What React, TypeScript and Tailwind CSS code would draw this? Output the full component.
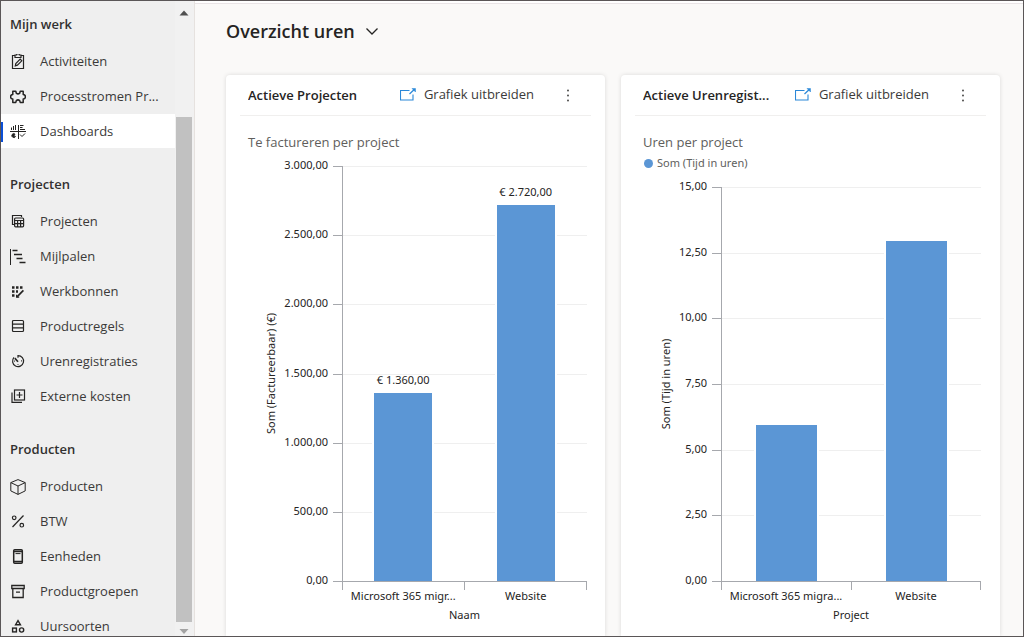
import type { ReactNode } from 'react';

interface NavItem {
  label: string;
  icon: ReactNode;
  active?: boolean;
}

interface NavGroup {
  title: string;
  items: NavItem[];
}

interface Bar {
  label: string;
  value: number;
  caption?: string;
}

interface ChartProps {
  top: number;
  left: number;
  right: number;
  barWidth: number;
  max: number;
  ticks: string[];
  bars: Bar[];
  yTitle: string;
  xTitle: string;
}

function Icon({ children }: { children: ReactNode }) {
  return (
    <svg
      viewBox="0 0 16 16"
      className="h-4 w-4 shrink-0"
      fill="none"
      stroke="#252423"
      strokeWidth="1.2"
      aria-hidden="true"
    >
      {children}
    </svg>
  );
}

const NAV: NavGroup[] = [
  {
    title: 'Mijn werk',
    items: [
      {
        label: 'Activiteiten',
        icon: (
          <Icon>
            <path d="M5 1.5H2.5v13h11v-13H11M5 3.500V1h1.600a1.400 1.400 0 0 1 2.800 0H11v2.500z" />
            <path d="M5.300 11.800l.5-2.200 4.400-4.400 1.600 1.600-4.400 4.400z" />
          </Icon>
        ),
      },
      {
        label: 'Processtromen Pr...',
        icon: (
          <Icon>
            <path
              strokeWidth="1.5"
              strokeLinejoin="round"
              d="M2.8 2.2H5.8L6.3 4.2Q8 5.6 9.7 4.2L10.2 2.2H13.2V5.5Q15.4 5.6 15.4 7.8T13.2 10.1V13.4H10.2L9.7 11.6Q8 10.2 6.3 11.6L5.8 13.4H2.8V10.1Q.6 10 .6 7.8T2.8 5.5z"
            />
          </Icon>
        ),
      },
      {
        label: 'Dashboards',
        active: true,
        icon: (
          <Icon>
            <path d="M0 7.5h16M8.5 1v14M1.5 6V3.5M3.5 6V2M5.5 6V1M10 1.500h3.500M10 3.500h2.500M10 5.500h5" strokeWidth="1" />
            <path d="M5 10a2 2 0 1 0 .6 2.400H3.800z" fill="#252423" strokeWidth="0.8" />
            <path d="M10 10.500l2 2 3-3" strokeWidth="1" />
          </Icon>
        ),
      },
    ],
  },
  {
    title: 'Projecten',
    items: [
      {
        label: 'Projecten',
        icon: (
          <Icon>
            <path d="M4 10.500H2.500v-9h9V3" />
            <rect x="4.6" y="4" width="9" height="8.8" rx="1" />
            <path d="M4.600 6.500h9M4.600 9.600h9M7.600 6.500v6.400M10.600 6.500v6.400" />
          </Icon>
        ),
      },
      {
        label: 'Mijlpalen',
        icon: (
          <Icon>
            <path d="M.5 0v16" strokeWidth="1" />
            <path d="M2.500 1.500h5M4 5.500h8M6.500 9.500h6M9.500 13.500h6" strokeWidth="1.6" />
          </Icon>
        ),
      },
      {
        label: 'Werkbonnen',
        icon: (
          <Icon>
            <path d="M2 3.500h10.500M2 7.500h6M2 11.500h2.500" strokeWidth="2.4" strokeDasharray="2.5 1.5" />
            <path d="M7 12.800L13.400 6.400" strokeWidth="1.7" />
            <path d="M6.600 10.800v2.400h2.600" />
          </Icon>
        ),
      },
      {
        label: 'Productregels',
        icon: (
          <Icon>
            <rect x="2.5" y="1.5" width="11" height="11" rx="1" />
            <path d="M2.500 5.200h11M2.500 8.800h11" />
          </Icon>
        ),
      },
      {
        label: 'Urenregistraties',
        icon: (
          <Icon>
            <path d="M8 3.800V1.600a5.500 5.500 0 1 1-4 1.800" />
            <path d="M4.800 4.100L8 7.700" strokeWidth="1.6" />
            <path d="M11 6.900h.9M7.600 10.500h.8M4.200 7.100h.8" />
          </Icon>
        ),
      },
      {
        label: 'Externe kosten',
        icon: (
          <Icon>
            <rect x="4.5" y="1" width="10" height="10" />
            <path d="M2 3.500v9.800h10M9.500 3v6M6.500 6h6" />
          </Icon>
        ),
      },
    ],
  },
  {
    title: 'Producten',
    items: [
      {
        label: 'Producten',
        icon: (
          <Icon>
            <path d="M8 .6l7.200 3v8.300L8 15.400.8 11.900V3.600zM.8 3.600L8 7l7.200-3.400M8 7v8.400" strokeWidth="1" />
          </Icon>
        ),
      },
      {
        label: 'BTW',
        icon: (
          <Icon>
            <circle cx="4.2" cy="3.8" r="1.8" />
            <circle cx="11.8" cy="11.2" r="1.8" />
            <path d="M13.500 1.500L2.500 13" />
          </Icon>
        ),
      },
      {
        label: 'Eenheden',
        icon: (
          <Icon>
            <rect x="3.7" y=".8" width="8.6" height="13.4" rx="1" strokeWidth="1.5" />
            <path d="M4 2.600h8M4 12.500h8" strokeWidth="1.5" />
            <path d="M5.500 4.600h5" strokeWidth="1" />
          </Icon>
        ),
      },
      {
        label: 'Productgroepen',
        icon: (
          <Icon>
            <path d="M1.800 1.500h12.400v3H1.800zM2.800 4.500v9h10.400v-9M6 8.100h4" strokeWidth="1.3" />
          </Icon>
        ),
      },
      {
        label: 'Uursoorten',
        icon: (
          <Icon>
            <path d="M8 1.700l2.400 4H5.600z" strokeWidth="1.4" />
            <rect x="2.6" y="9.1" width="3.8" height="3.8" strokeWidth="1.4" />
            <circle cx="11.6" cy="11" r="2.1" strokeWidth="1.4" />
          </Icon>
        ),
      },
    ],
  },
];

function Sidebar() {
  return (
    <aside className="flex shrink-0 overflow-hidden border-r border-[#e6e2df] bg-[#efefef]">
      <nav className="w-[174px] pt-[3px]">
        {NAV.map((group) => (
          <section key={group.title} className="mb-4">
            <h2 className="flex h-10 items-center pt-px pl-[9px] text-[13px] font-semibold text-[#323130]">
              {group.title}
            </h2>
            <ul className="flex flex-col gap-px">
              {group.items.map((item) => (
                <li key={item.label}>
                  <a
                    href="#"
                    aria-current={item.active ? 'page' : undefined}
                    className={`relative flex h-[34px] items-center gap-[14px] pt-[2px] pl-[9px] text-[13px] whitespace-nowrap text-[#3b3a39] ${
                      item.active ? 'bg-white' : ''
                    }`}
                  >
                    {item.active && <span className="absolute left-0 h-5 w-[2px] bg-[#0b4fd6]" />}
                    {item.icon}
                    {item.label}
                  </a>
                </li>
              ))}
            </ul>
          </section>
        ))}
      </nav>
      <div className="flex w-[19px] flex-col items-center bg-[#f1f1f1] pr-[2px] pl-px">
        <svg viewBox="0 0 16 16" className="h-6 w-4 shrink-0" aria-hidden="true">
          <path d="M3.500 10.500L8 5.500l4.500 5z" fill="#505050" />
        </svg>
        <div className="mt-[92px] w-4 flex-1 bg-[#c1c1c1]" />
        <svg viewBox="0 0 16 14" className="h-[14px] w-4 shrink-0" aria-hidden="true">
          <path d="M3.500 7L8 12l4.500-5z" fill="#a3a3a3" />
        </svg>
      </div>
    </aside>
  );
}

// y of the baseline inside the chart's viewBox
const BOTTOM = 431;

function BarChart({ top, left, right, barWidth, max, ticks, bars, yTitle, xTitle }: ChartProps) {
  const height = BOTTOM - top;
  const slot = (right - left) / bars.length;

  return (
    <svg
      viewBox="0 0 379 476"
      className="block w-full font-['Noto_Sans',sans-serif] text-[11px]"
      fill="#252423"
      role="img"
      aria-label={`${yTitle} / ${xTitle}`}
    >
      {ticks.map((tick, i) => {
        const y = Math.round(BOTTOM - (height * i) / (ticks.length - 1)) + 0.5;
        return (
          <g key={tick}>
            {i > 0 && <path d={`M${left} ${y}H${right}`} stroke="#efefef" />}
            <path d={`M${left - 9} ${y}H${left}`} stroke="#a6a8ad" />
            <text x={left - 14} y={y + 2.5} textAnchor="end">
              {tick}
            </text>
          </g>
        );
      })}
      {bars.map((bar, i) => {
        const center = left + slot * (i + 0.5);
        const barHeight = Math.floor((height * bar.value) / max);
        const x = Math.round(center - barWidth / 2);
        return (
          <g key={bar.label}>
            <rect x={x - 2} y={BOTTOM - barHeight} width={barWidth + 4} height={barHeight} fill="#ffffff" />
            <rect x={x} y={BOTTOM - barHeight} width={barWidth} height={barHeight} fill="#5b96d5" />
            {bar.caption && (
              <text x={center} y={BOTTOM - barHeight - 9} textAnchor="middle">
                {bar.caption}
              </text>
            )}
            <text x={center} y={BOTTOM + 19} textAnchor="middle">
              {bar.label}
            </text>
          </g>
        );
      })}
      <path
        d={`M${left + 0.5} ${top}V440M${left} ${BOTTOM + 0.5}H${right}M${Math.floor(left + slot) + 0.5} 431V440M${right - 0.5} 431V440`}
        fill="none"
        stroke="#a6a8ad"
      />
      <text x={(left + right) / 2} y={BOTTOM + 38} textAnchor="middle">
        {xTitle}
      </text>
      <text transform={`translate(49 ${(top + BOTTOM) / 2}) rotate(-90)`} textAnchor="middle">
        {yTitle}
      </text>
    </svg>
  );
}

interface ChartCardProps {
  title: string;
  subtitle: string;
  legend?: string;
  chart: ChartProps;
}

function ChartCard({ title, subtitle, legend, chart }: ChartCardProps) {
  return (
    <article className="min-w-0 rounded-t-sm bg-white shadow-[0_0_4px_rgba(0,0,0,0.13)]">
      <header className="mx-[14px] flex h-[41px] items-center border-b border-[#f0efee] pr-[15px] pl-2">
        <h2 className="min-w-0 flex-1 truncate pt-px text-[13px] font-semibold text-[#252423]">{title}</h2>
        <button type="button" className="flex items-center gap-2 text-[13px] whitespace-nowrap text-[#3b3a39]">
          <svg viewBox="0 0 16 14" className="h-[14px] w-4" fill="none" stroke="#2b88d8" aria-hidden="true">
            <path d="M9.500 2.500h-9v9.500h12.500V6.500" strokeWidth="1.1" />
            <path d="M9.500 6L14.500 1.300" strokeWidth="1.2" />
            <path d="M12 .5h3.500V4z" fill="#2b88d8" strokeWidth="0.5" />
          </svg>
          Grafiek uitbreiden
        </button>
        <button type="button" aria-label="Meer opdrachten" className="ml-[26px] flex w-4 justify-center">
          <svg viewBox="0 0 4 14" className="h-[14px] w-1" fill="#3b3a39" aria-hidden="true">
            <circle cx="2" cy="2.5" r="0.9" />
            <circle cx="2" cy="7.5" r="0.9" />
            <circle cx="2" cy="12.5" r="0.9" />
          </svg>
        </button>
      </header>
      {/* the chart slides up under the subtitle and legend */}
      <div className="grid">
        <div className="col-start-1 row-start-1 pt-[15px] pl-[22px]">
          <h3 className="text-[13px] leading-[22px] text-[#605e5c]">{subtitle}</h3>
          {legend && (
            <p className="flex items-center gap-1 font-['Noto_Sans',sans-serif] text-[11px] leading-5 text-[#605e5c]">
              <span className="ml-px h-[9px] w-[9px] rounded-full bg-[#5b96d5]" />
              {legend}
            </p>
          )}
        </div>
        <div className="col-start-1 row-start-1 pt-[34px]">
          <BarChart {...chart} />
        </div>
      </div>
    </article>
  );
}

export default function App() {
  return (
    <div className="flex h-screen overflow-hidden border border-[#5a5657] bg-[#faf9f8] font-['Open_Sans','Noto_Sans',sans-serif]">
      <Sidebar />
      <main className="flex min-w-0 flex-1 flex-col overflow-hidden">
        <div className="h-[3px] shrink-0 border-b border-[#e9e4e6] bg-white" />
        <h1 className="flex h-[54px] shrink-0 items-center pl-[31px] text-[18px] font-semibold text-[#252423]">
          <button type="button" className="flex items-center gap-[10px]">
            Overzicht uren
            <svg
              viewBox="0 0 14 14"
              className="h-[14px] w-[14px]"
              fill="none"
              stroke="#252423"
              strokeWidth="1.3"
              aria-hidden="true"
            >
              <path d="M1.500 4.500L7 10l5.500-5.500" />
            </svg>
          </button>
        </h1>
        <div className="grid flex-1 grid-cols-2 gap-4 pt-[17px] pr-[23px] pl-[31px]">
          <ChartCard
            title="Actieve Projecten"
            subtitle="Te factureren per project"
            chart={{
              top: 16,
              left: 116,
              right: 361,
              barWidth: 58,
              max: 3000,
              ticks: ['0,00', '500,00', '1.000,00', '1.500,00', '2.000,00', '2.500,00', '3.000,00'],
              bars: [
                { label: 'Microsoft 365 migr...', value: 1360, caption: '€ 1.360,00' },
                { label: 'Website', value: 2720, caption: '€ 2.720,00' },
              ],
              yTitle: 'Som (Factureerbaar) (€)',
              xTitle: 'Naam',
            }}
          />
          <ChartCard
            title="Actieve Urenregist..."
            subtitle="Uren per project"
            legend="Som (Tijd in uren)"
            chart={{
              top: 37,
              left: 100,
              right: 360,
              barWidth: 61,
              max: 15,
              ticks: ['0,00', '2,50', '5,00', '7,50', '10,00', '12,50', '15,00'],
              bars: [
                { label: 'Microsoft 365 migra...', value: 5.95 },
                { label: 'Website', value: 12.95 },
              ],
              yTitle: 'Som (Tijd in uren)',
              xTitle: 'Project',
            }}
          />
        </div>
      </main>
    </div>
  );
}
